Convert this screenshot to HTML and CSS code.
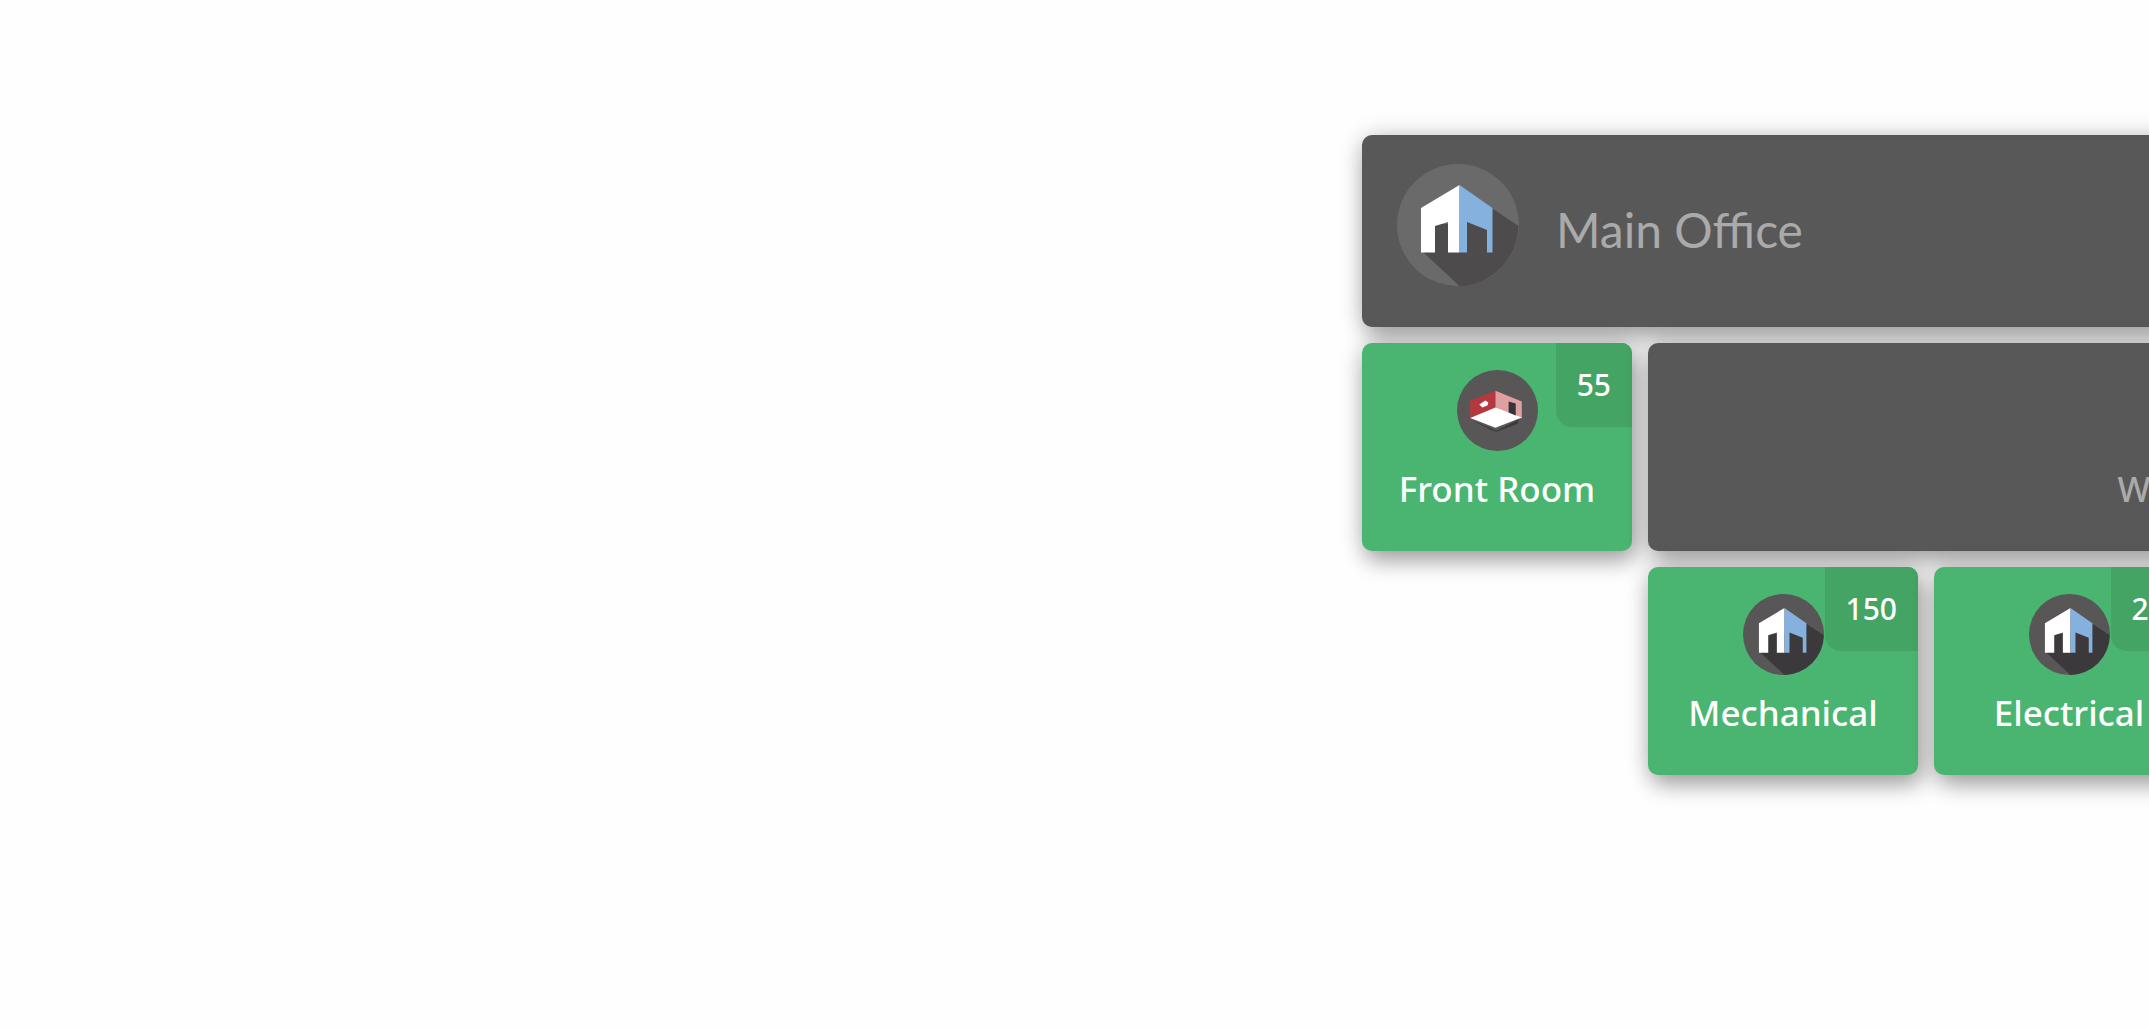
FILE: index.html
```html
<!DOCTYPE html>
<html lang="en">
<head>
    <meta charset="UTF-8">
    <meta name="viewport" content="width=device-width, initial-scale=1.0">
    <title>Main Office</title>
    <link rel="stylesheet" href="styles.css">
</head>
<body>
    <!-- shared icons -->
    <svg class="sprite" aria-hidden="true">
        <symbol id="house" viewBox="0 0 122 122">
            <circle class="disc" cx="61" cy="61" r="61"/>
            <path class="shade" d="M96 45 L121.500 62 A61 61 0 0 1 62.500 122 L26 88 L38 60 L60 60 Z"/>
            <path fill="#fff" d="M24 44 L62.500 21 V88.500 H51 V58 L38 62 V88.500 H24 Z"/>
            <path fill="#85b1df" d="M62.500 21 L95.500 44 V88.500 H90 V66 L70 58 V88.500 H62.500 Z"/>
        </symbol>
        <symbol id="room" viewBox="0 0 80 80">
            <circle class="disc" cx="40" cy="40" r="40"/>
            <path fill="#3c3a3a" d="M16 50 L39 60 L61 49 L60 53 L39 61 L33 59 Z"/>
            <path fill="#b6383f" d="M13 30 L38 20.500 V38 L13 48 Z"/>
            <path fill="#dfa0a2" d="M38 20.500 L64 31 V48 L38 38 Z"/>
            <path fill="#fff" d="M13 47.500 L38 37 L64 47 L38 57 Z"/>
            <path fill="#fff" d="M22 34 L28 30 L31 32 L30 35 L25 37 Z"/>
            <path fill="#35343a" d="M51 31 L58 33 V45 L51 42 Z"/>
        </symbol>
    </svg>

    <div class="board">
        <div class="card card-main">
            <svg class="icon-large" aria-hidden="true"><use href="#house"/></svg>
            <h1 class="title">Main Office</h1>
        </div>
        <div class="children">
            <div class="card card-leaf">
                <span class="badge">55</span>
                <svg class="icon" aria-hidden="true"><use href="#room"/></svg>
                <span class="name">Front Room</span>
            </div>
            <div class="branch">
                <div class="card card-group">
                    <svg class="icon" aria-hidden="true"><use href="#house"/></svg>
                    <span class="name">Warehouse</span>
                </div>
                <div class="children">
                    <div class="card card-leaf">
                        <span class="badge">150</span>
                        <svg class="icon" aria-hidden="true"><use href="#house"/></svg>
                        <span class="name">Mechanical</span>
                    </div>
                    <div class="card card-leaf">
                        <span class="badge">200</span>
                        <svg class="icon" aria-hidden="true"><use href="#house"/></svg>
                        <span class="name">Electrical</span>
                    </div>
                </div>
            </div>
        </div>
    </div>
</body>
</html>
```

FILE: styles.css
```css
* {
    box-sizing: border-box;
}

body {
    margin: 0;
    min-height: 100vh;
    padding-top: 135px;
    display: flex;
    justify-content: flex-end;
    align-items: flex-start;
    overflow: hidden;
    background: #fefefe;
    font-family: "Noto Sans", "Open Sans", sans-serif;
}

.sprite {
    position: absolute;
    width: 0;
    height: 0;
}

/* the board runs past the right edge of the window */
.board {
    flex: none;
    width: 1414px;
    margin-right: -627px;
    display: flex;
    flex-direction: column;
    gap: 16px;
}

.children {
    display: flex;
    gap: 16px;
}

.branch {
    flex: 1;
    display: flex;
    flex-direction: column;
    gap: 16px;
}

.card {
    position: relative;
    border-radius: 10px;
    box-shadow: 4px 10px 22px rgba(0, 0, 0, 0.32), 0 0 26px rgba(0, 0, 0, 0.14);
}

.card-main {
    display: flex;
    align-items: flex-start;
    gap: 37px;
    padding: 29px 35px 41px;
    background: #585858;
    color: #aaa;
}

.card-leaf,
.card-group {
    display: flex;
    flex-direction: column;
    align-items: center;
    gap: 14px;
    padding: 27px 16px 38px;
}

.card-leaf {
    flex: none;
    align-self: flex-start;
    width: 270px;
    background: #49b570;
    color: #fff;
}

.card-group {
    background: #585858;
    color: #aaa;
}

.icon {
    --shade: #3b393b;
    width: 81px;
    height: 81px;
    color: #585656;
}

.icon-large {
    --shade: #4d4b4c;
    width: 122px;
    height: 122px;
    color: #6a6a6a;
}

.disc {
    fill: currentColor;
}

.shade {
    fill: var(--shade);
}

.title {
    margin: 36px 0 0;
    font-family: Lato, sans-serif;
    font-size: 48px;
    font-weight: 400;
    line-height: 60px;
}

.name {
    font-size: 35px;
    font-weight: 500;
    line-height: 48px;
    white-space: nowrap;
}

.badge {
    position: absolute;
    top: 0;
    right: 0;
    padding: 0 21px;
    border-radius: 0 10px 0 16px;
    background: #44a463;
    font-size: 30px;
    font-weight: 500;
    line-height: 84px;
}
```
